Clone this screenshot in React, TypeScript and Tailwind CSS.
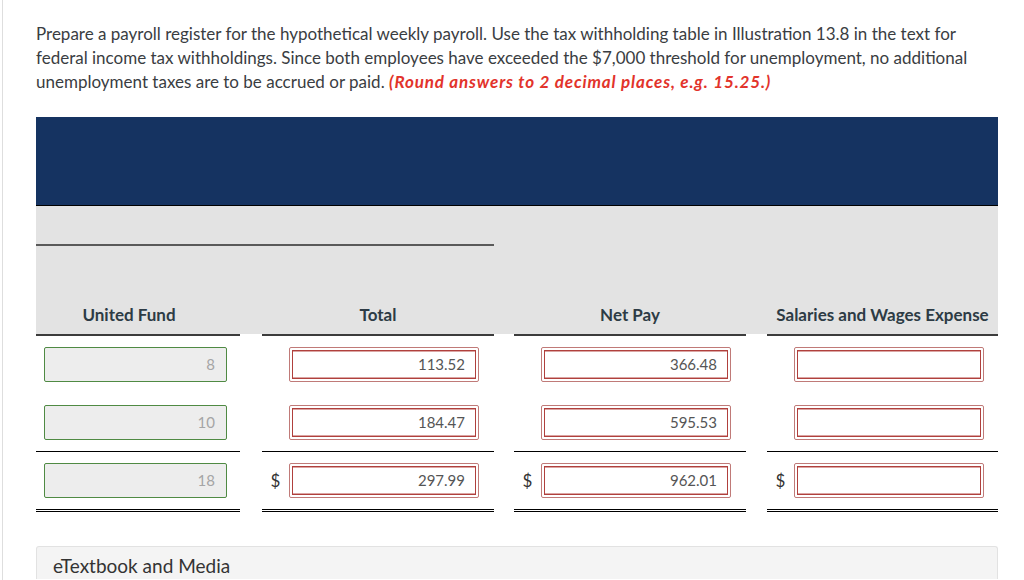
import React from 'react';

type Row = { fund: string; total: string; net: string; salaries: string; dollar?: boolean; rule: 'none' | 'single' | 'double' };

const rows: Row[] = [
  { fund: '8', total: '113.52', net: '366.48', salaries: '', rule: 'none' },
  { fund: '10', total: '184.47', net: '595.53', salaries: '', rule: 'single' },
  { fund: '18', total: '297.99', net: '962.01', salaries: '', dollar: true, rule: 'double' },
];

const ruleClass = (rule: Row['rule']) =>
  rule === 'single'
    ? 'border-b border-black'
    : rule === 'double'
    ? 'border-b-[3px] border-double border-black'
    : 'border-b border-transparent';

const GreenInput: React.FC<{ value: string }> = ({ value }) => (
  <div className="flex h-[35px] w-[183px] items-center justify-end rounded-[2px] border border-[#4f8a43] bg-[#ededed] pr-[11px] text-[15px] text-[#a5a5a5]">
    {value}
  </div>
);

const RedInput: React.FC<{ value: string }> = ({ value }) => (
  <div className="h-[35px] w-[190px] rounded-[2px] border border-[#c07a78] bg-white p-[2px]">
    <div className="flex h-full w-full items-center justify-end border border-[#b0403d] pr-[10px] text-[15px] text-[#555] shadow-[inset_0_1px_0_#dba5a3,inset_0_-1px_0_#dba5a3]">
      {value}
    </div>
  </div>
);

const MoneyCell: React.FC<{ value: string; dollar?: boolean; rule: Row['rule']; width: string }> = ({
  value,
  dollar,
  rule,
  width,
}) => (
  <div className={`flex items-center py-[11px] pr-[14px] ${width} ${ruleClass(rule)}`}>
    <div className="flex w-[27px] justify-center text-[17px] text-[#333]">{dollar ? '$' : ''}</div>
    <RedInput value={value} />
  </div>
);

export default function App() {
  return (
    <div className="ml-[2px] min-h-[580px] overflow-hidden border-l border-[#dedede] bg-white pl-[33px] pr-[26px] font-['Lato',sans-serif] text-[#333]">
      <p className="pt-[22px] text-[17px] leading-[24px] text-[#3a3d42]">
        Prepare a payroll register for the hypothetical weekly payroll. Use the tax withholding table in Illustration 13.8 in the text for
        federal income tax withholdings. Since both employees have exceeded the $7,000 threshold for unemployment, no additional
        unemployment taxes are to be accrued or paid.{' '}
        <span className="font-bold italic tracking-[0.85px] text-[#e2332b]">(Round answers to 2 decimal places, e.g. 15.25.)</span>
      </p>

      <div className="mt-[23px] w-[962px]">
        <div className="h-[89px] border-b border-black bg-[#153361]" />

        <div className="bg-[#e3e3e3]">
          <div className="h-[41px]">
            <div className="h-[40px] w-[458px] border-b-2 border-[#5a5a5a]" />
          </div>
          <div className="flex h-[87px] items-end text-[17px] font-bold text-[#2d3b45]">
            <div className="w-[204px] pb-[7px] pr-[18px] text-center">United Fund</div>
            <div className="ml-[22px] w-[232px] pb-[7px] text-center">Total</div>
            <div className="ml-[20px] w-[232px] pb-[7px] text-center">Net Pay</div>
            <div className="ml-[21px] w-[231px] whitespace-nowrap pb-[7px] text-center">Salaries and Wages Expense</div>
          </div>
        </div>

        <div className="flex">
          <div className="h-[2px] w-[204px] bg-[#3c3c3c]" />
          <div className="ml-[22px] h-[2px] w-[232px] bg-[#3c3c3c]" />
          <div className="ml-[20px] h-[2px] w-[232px] bg-[#3c3c3c]" />
          <div className="ml-[21px] h-[2px] w-[231px] bg-[#3c3c3c]" />
        </div>

        {rows.map((r, i) => (
          <div key={i} className="flex">
            <div className={`flex w-[204px] items-center py-[11px] pl-[8px] ${ruleClass(r.rule)}`}>
              <GreenInput value={r.fund} />
            </div>
            <div className="ml-[22px]">
              <MoneyCell value={r.total} dollar={r.dollar} rule={r.rule} width="w-[232px]" />
            </div>
            <div className="ml-[20px]">
              <MoneyCell value={r.net} dollar={r.dollar} rule={r.rule} width="w-[232px]" />
            </div>
            <div className="ml-[21px]">
              <MoneyCell value={r.salaries} dollar={r.dollar} rule={r.rule} width="w-[231px]" />
            </div>
          </div>
        ))}
      </div>

      <div className="mt-[34px] w-[962px] rounded-t-[3px] border border-b-0 border-[#e2e2e2] bg-[#f4f4f4] px-[16px] pt-[6px] text-[19px] leading-[26px] text-[#333]">
        eTextbook and Media
      </div>
    </div>
  );
}
